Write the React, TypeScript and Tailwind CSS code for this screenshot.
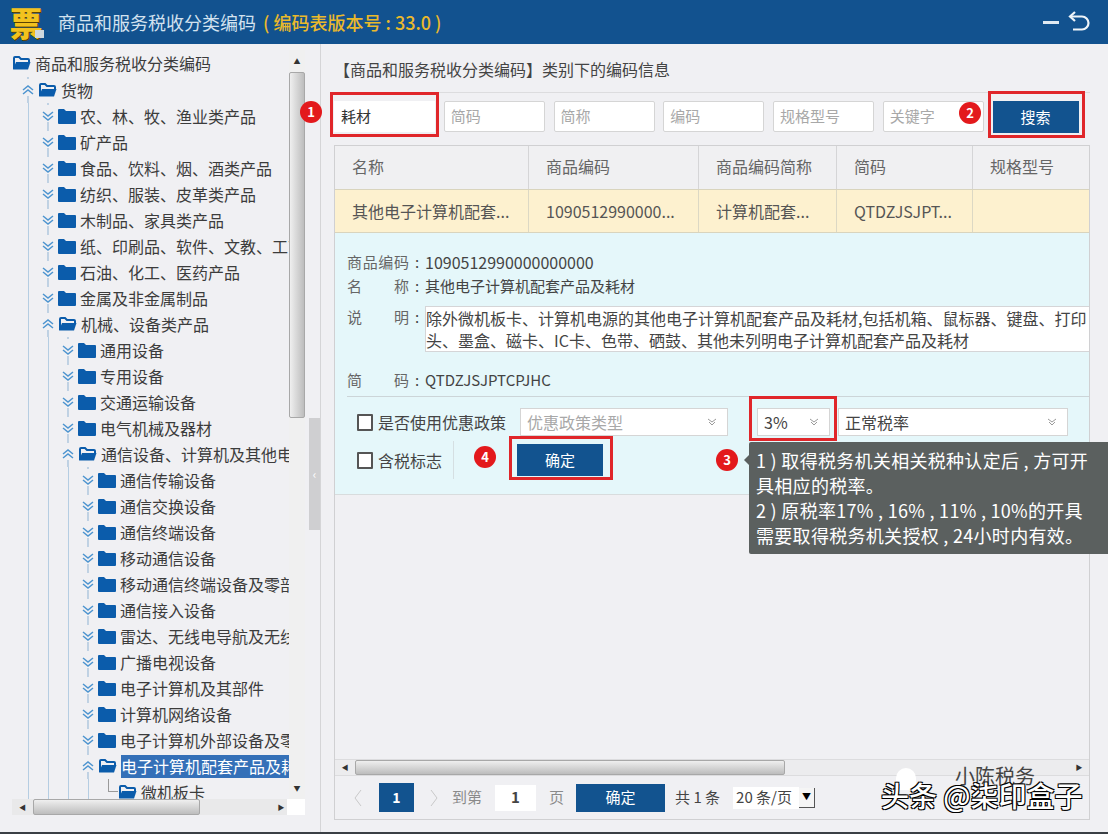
const treeRows = [
  { level: 0, label: "商品和服务税收分类编码", open: true },
  { level: 1, label: "货物", open: true },
  { level: 2, label: "农、林、牧、渔业类产品" },
  { level: 2, label: "矿产品" },
  { level: 2, label: "食品、饮料、烟、酒类产品" },
  { level: 2, label: "纺织、服装、皮革类产品" },
  { level: 2, label: "木制品、家具类产品" },
  { level: 2, label: "纸、印刷品、软件、文教、工艺品" },
  { level: 2, label: "石油、化工、医药产品" },
  { level: 2, label: "金属及非金属制品" },
  { level: 2, label: "机械、设备类产品", open: true },
  { level: 3, label: "通用设备" },
  { level: 3, label: "专用设备" },
  { level: 3, label: "交通运输设备" },
  { level: 3, label: "电气机械及器材" },
  { level: 3, label: "通信设备、计算机及其他电子设备", open: true },
  { level: 4, label: "通信传输设备" },
  { level: 4, label: "通信交换设备" },
  { level: 4, label: "通信终端设备" },
  { level: 4, label: "移动通信设备" },
  { level: 4, label: "移动通信终端设备及零部件" },
  { level: 4, label: "通信接入设备" },
  { level: 4, label: "雷达、无线电导航及无线电设备" },
  { level: 4, label: "广播电视设备" },
  { level: 4, label: "电子计算机及其部件" },
  { level: 4, label: "计算机网络设备" },
  { level: 4, label: "电子计算机外部设备及零部件" },
  { level: 4, label: "电子计算机配套产品及耗材", open: true, selected: true },
  { level: 5, label: "微机板卡", open: true },
];

const Folder = ({ open }: { open?: boolean }) =>
  open ? (
    <svg width="19" height="16" viewBox="0 0 19 16" className="shrink-0">
      <path d="M2 14V3q0-1 1-1h4l2 2h7q1 0 1 1v2" fill="none" stroke="#0b5cab" strokeWidth="2" />
      <path d="M1 14.5 4 7h14.5l-2.500 7.500z" fill="#0b5cab" />
    </svg>
  ) : (
    <svg width="18" height="15" viewBox="0 0 18 15" className="shrink-0">
      <path d="M0 1q0-1 1-1h5l2 2h9q1 0 1 1v11q0 1-1 1H1q-1 0-1-1z" fill="#0b5cab" />
    </svg>
  );

const Toggle = ({ open }: { open?: boolean }) => (
  <svg width="16" height="26" viewBox="0 0 16 26" className="shrink-0">
    <path d="M8 0v4" stroke="#8fb3d3" strokeDasharray="2 2" />
    <path d="M8 19v7" stroke="#8fb3d3" />
    {open ? (
      <path d="M3 13l5-4 5 4M3 17l5-4 5 4" fill="none" stroke="#4d94cf" strokeWidth="1.500" />
    ) : (
      <path d="M3 9l5 4 5-4M3 13l5 4 5-4" fill="none" stroke="#4d94cf" strokeWidth="1.500" />
    )}
  </svg>
);

const TreeRow = ({ row }: { row: (typeof treeRows)[number] }) => {
  const guides = Array.from({ length: Math.max(row.level - 1, 0) });
  return (
    <div className={`flex h-[26px] shrink-0 items-center whitespace-nowrap ${row.level === 0 ? "mb-px pl-[12px]" : "pl-[18px]"}`}>
      {guides.map((_, i) => (
        <div key={i} className="flex h-full w-5 shrink-0 justify-center">
          <div className="h-full w-px bg-[#b5cde2]" />
        </div>
      ))}
      {row.level > 0 && (
        <div className="flex h-full w-5 shrink-0 justify-center">
          {row.level === 5 ? (
            <div className="ml-[10px] h-[13px] w-[11px] border-b border-l border-[#9a9a9a]" />
          ) : (
            <Toggle open={row.open} />
          )}
        </div>
      )}
      <Folder open={row.open} />
      <span
        className={`ml-[4px] h-[23px] pr-[40px] text-[16px] leading-[23px] ${
          row.selected ? "bg-[#3470b8] text-white" : "text-[#3c3c3c]"
        }`}
      >
        {row.label}
      </span>
    </div>
  );
};

const ScrollThumb = ({ className }: { className: string }) => (
  <div className={`rounded-[2px] border border-[#a8a8a8] bg-gradient-to-b from-[#efefef] to-[#bdbdbd] ${className}`} />
);

const Badge = ({ n, className }: { n: number; className: string }) => (
  <div
    className={`absolute flex h-[22px] w-[22px] items-center justify-center rounded-full bg-[#e3191c] text-[13px] font-bold text-white ${className}`}
  >
    {n}
  </div>
);

const Field = ({ placeholder }: { placeholder: string }) => (
  <div className="flex h-[31px] w-[101px] items-center rounded-[2px] border border-[#d5d5d5] bg-white pl-[6px] text-[15px] text-[#a8a8a8]">
    {placeholder}
  </div>
);

const Select = ({ text, muted, className }: { text: string; muted?: boolean; className: string }) => (
  <div
    className={`flex h-[28px] items-center justify-between border border-[#d5d5d5] bg-white pl-[6px] pr-[10px] text-[16px] ${
      muted ? "text-[#a8a8a8]" : "text-[#444]"
    } ${className}`}
  >
    <span>{text}</span>
    <svg width="10" height="10" viewBox="0 0 10 10">
      <path d="M1 2l4 3 4-3M2 5l3 3 3-3" fill="none" stroke="#9a9a9a" />
    </svg>
  </div>
);

const Check = ({ label, className }: { label: string; className: string }) => (
  <div className={`flex items-center ${className}`}>
    <div className="h-[17px] w-[16px] rounded-[1px] border-2 border-[#555] bg-white" />
    <span className="ml-[5px] text-[16px] text-[#444]">{label}</span>
  </div>
);

const InfoLabel = ({ chars }: { chars: string[] }) => (
  <>
    <span className="flex w-[62px] shrink-0 justify-between text-[#666]">
      {chars.map((c) => (
        <span key={c}>{c}</span>
      ))}
    </span>
    <span className="w-[16px] shrink-0 text-center text-[#444]">:</span>
  </>
);

const columns = [
  { head: "名称", cell: "其他电子计算机配套..." },
  { head: "商品编码", cell: "1090512990000..." },
  { head: "商品编码简称", cell: "计算机配套..." },
  { head: "简码", cell: "QTDZJSJPT..." },
  { head: "规格型号", cell: "" },
];

export default function App() {
  return (
    <div className="relative flex h-[834px] w-[1108px] flex-col overflow-hidden border-b-2 border-[#3a3f44] bg-[#f0f0f3] font-['Noto_Sans_CJK_SC','Noto_Sans',sans-serif]">
      <header className="flex h-[44px] shrink-0 items-center bg-[#12528f] pr-[18px]">
        <div className="relative ml-[8px] w-[36px] text-center text-[33px] font-black leading-[38px] text-[#f2c21f] [text-shadow:1px_1px_0_#5c4300]">
          票
          <div className="absolute bottom-[3px] right-0 h-[8px] w-[9px] bg-[#cfd8de]" />
        </div>
        <span className="ml-[14px] text-[18px] text-[#d3e2ef]">商品和服务税收分类编码</span>
        <span className="ml-[7px] text-[18px] font-medium text-[#eab92b]">( 编码表版本号 : 33.0 )</span>
        <div className="ml-auto flex items-center gap-[9px]">
          <div className="h-[3px] w-[16px] bg-[#dfe9f2]" />
          <svg width="22" height="22" viewBox="0 0 22 22">
            <path d="M7 1 2 5.500 7 10" fill="none" stroke="#eef4f9" strokeWidth="2.200" />
            <path d="M3 5.500h11a5.500 5.500 0 0 1 0 13H5" fill="none" stroke="#eef4f9" strokeWidth="2.200" />
          </svg>
        </div>
      </header>

      <div className="flex min-h-0 flex-1">
        {/* tree */}
        <div className="flex w-[305px] shrink-0 flex-col pt-[6px]">
          <div className="flex min-h-0 flex-1">
            <div className="flex w-[289px] shrink-0 flex-col overflow-hidden">
              {treeRows.map((row) => (
                <TreeRow key={row.label} row={row} />
              ))}
            </div>
            <div className="flex w-[16px] flex-col items-center bg-[#f0f0f0]">
              <div className="flex h-[22px] items-center text-[7px] leading-none text-[#333]">▲</div>
              <ScrollThumb className="h-[346px] w-full bg-gradient-to-r" />
              <div className="mt-auto flex h-[22px] items-center text-[7px] leading-none text-[#333]">▼</div>
            </div>
          </div>
          <div className="ml-[12px] mb-[17px] flex h-[16px] shrink-0 items-center bg-[#e9e9ea]">
            <span className="w-[21px] text-center text-[7px] text-[#333]">◀</span>
            <ScrollThumb className="h-full w-[167px]" />
            <span className="ml-auto w-[12px] text-center text-[7px] text-[#333]">▶</span>
            <div className="h-full w-[18px] bg-white" />
          </div>
        </div>
        {/* splitter */}
        <div className="w-[16px] shrink-0 border-r border-[#d5d5d7] pl-[4px] pt-[374px]">
          <div className="flex h-[112px] items-center justify-center bg-[#cfcfd1] text-[12px] text-white">‹</div>
        </div>

        {/* right side */}
        <div className="flex min-w-0 flex-1 flex-col pb-[12px] pl-[13px] pr-[18px]">
          <div className="flex h-[48px] shrink-0 items-end pb-[11px] text-[16px] text-[#444]">
            【商品和服务税收分类编码】类别下的编码信息
          </div>
          <div className="flex h-[53px] shrink-0 items-start gap-[8.75px] border-t border-[#dcdcde] pt-[8px]">
            <div className="flex h-[31px] w-[101px] items-center bg-white pl-[7px] text-[15px] text-[#333]">耗材</div>
            <Field placeholder="简码" />
            <Field placeholder="简称" />
            <Field placeholder="编码" />
            <Field placeholder="规格型号" />
            <Field placeholder="关键字" />
            <div className="flex h-[32px] w-[86px] items-center justify-center bg-[#12538f] text-[15px] text-white">
              搜索
            </div>
          </div>

          <div className="flex min-h-0 flex-1 flex-col border border-[#d0d0d2]">
            <div className="grid h-[43px] shrink-0 grid-cols-[194px_170px_138px_136px_1fr] bg-[#f0f0f2] text-[16px] text-[#666]">
              {columns.map((c) => (
                <div key={c.head} className="flex items-center border-r border-[#d5d5d7] pb-[3px] pl-[17px] last:border-r-0">
                  {c.head}
                </div>
              ))}
            </div>
            <div className="grid h-[44px] shrink-0 grid-cols-[194px_170px_138px_136px_1fr] border-y border-[#d9d4bd] bg-[#fdf1cf] text-[16px] text-[#555]">
              {columns.map((c) => (
                <div key={c.head} className="flex items-center border-r border-[#dcd8c4] pl-[17px] last:border-r-0">
                  {c.cell}
                </div>
              ))}
            </div>

            <div className="flex h-[262px] shrink-0 flex-col border-b border-[#d8dcdd] bg-[#e5f7fa] pl-[12px] pt-[17px] text-[15px]">
              <div className="flex h-[24px] items-center">
                <InfoLabel chars={["商", "品", "编", "码"]} />
                <span className="text-[16px] text-[#444]">1090512990000000000</span>
              </div>
              <div className="flex h-[24px] items-center">
                <InfoLabel chars={["名", "称"]} />
                <span className="text-[#444]">其他电子计算机配套产品及耗材</span>
              </div>
              <div className="mt-[8px] flex items-start">
                <InfoLabel chars={["说", "明"]} />
                <div className="h-[46px] min-w-0 flex-1 overflow-hidden whitespace-nowrap border-y border-l border-[#d5d5d7] bg-white text-[16px] leading-[22px] text-[#444]">
                  除外微机板卡、计算机电源的其他电子计算机配套产品及耗材,包括机箱、鼠标器、键盘、打印
                  <br />
                  头、墨盒、磁卡、IC卡、色带、硒鼓、其他未列明电子计算机配套产品及耗材
                </div>
              </div>
              <div className="mt-[16px] flex h-[24px] items-center">
                <InfoLabel chars={["简", "码"]} />
                <span className="text-[#444]">QTDZJSJPTCPJHC</span>
              </div>
              <div className="mt-[4px] h-px bg-[#ccd5d8]" />
              <div className="mt-[11px] flex items-center">
                <Check label="是否使用优惠政策" className="ml-[10px] w-[163px]" />
                <Select text="优惠政策类型" muted className="w-[208px]" />
                <Select text="3%" className="ml-[29px] w-[73px]" />
                <Select text="正常税率" className="ml-[8px] w-[230px]" />
              </div>
              <div className="mt-[5px] flex items-center">
                <Check label="含税标志" className="ml-[10px] w-[97px] border-r border-[#d5dfe2] py-[7px]" />
                <div className="ml-[63px] flex h-[32px] w-[86px] items-center justify-center bg-[#12538f] text-[15px] text-white">
                  确定
                </div>
              </div>
            </div>

            <div className="min-h-0 flex-1" />

            <div className="flex h-[17px] shrink-0 items-center border-y border-[#dcdcde] bg-[#ececee]">
              <span className="w-[20px] text-center text-[7px] text-[#333]">◀</span>
              <ScrollThumb className="h-full w-[430px]" />
              <span className="ml-auto w-[20px] text-center text-[7px] text-[#333]">▶</span>
            </div>
            <div className="flex h-[43px] shrink-0 items-center text-[15px] text-[#8a8a8a]">
              <svg width="10" height="18" viewBox="0 0 10 18" className="ml-[18px]">
                <path d="M8 1 2 9l6 8" fill="none" stroke="#c9c9c9" />
              </svg>
              <div className="ml-[16px] flex h-[29px] w-[35px] items-center justify-center bg-[#12538f] text-[14px] font-bold text-white">
                1
              </div>
              <svg width="10" height="18" viewBox="0 0 10 18" className="ml-[15px]">
                <path d="M2 1l6 8-6 8" fill="none" stroke="#c9c9c9" />
              </svg>
              <span className="ml-[13px]">到第</span>
              <div className="ml-[13px] flex h-[26px] w-[41px] items-center justify-center bg-white font-bold text-[#444]">
                1
              </div>
              <span className="ml-[13px]">页</span>
              <div className="ml-[12px] flex h-[28px] w-[89px] items-center justify-center bg-[#12538f] text-white">确定</div>
              <span className="ml-[10px] text-[#444]">共 1 条</span>
              <div className="ml-[13px] flex h-[22px] w-[66px] items-center bg-white pl-[3px] text-[#444]">20 条/页</div>
              <div className="flex h-[20px] w-[16px] items-center justify-center border-b border-r border-[#555] bg-[#f5f5f5] text-[9px] text-black">
                ▼
              </div>
            </div>
          </div>
        </div>
      </div>

      {/* annotations */}
      <div className="absolute left-[330px] top-[92px] h-[45px] w-[109px] border-[3px] border-[#e0262a]" />
      <div className="absolute left-[988px] top-[91px] h-[47px] w-[97px] border-[3px] border-[#e0262a]" />
      <div className="absolute left-[749px] top-[396px] h-[45px] w-[88px] border-[3px] border-[#e0262a]" />
      <div className="absolute left-[509px] top-[436px] h-[44px] w-[104px] border-[3px] border-[#e0262a]" />
      <Badge n={1} className="left-[300px] top-[101px]" />
      <Badge n={2} className="left-[959px] top-[102px]" />
      <Badge n={3} className="left-[716px] top-[449px]" />
      <Badge n={4} className="left-[474px] top-[446px]" />

      <div className="absolute left-[749px] top-[442px] h-[112px] w-[359px] rounded-l-[2px] bg-[#5b605f] pl-[7px] pt-[6px] text-[18px] leading-[25px] tracking-[0.3px] text-white whitespace-nowrap">
        <div className="absolute -left-[5px] top-[13px] h-0 w-0 border-y-[5px] border-r-[5px] border-y-transparent border-r-[#5b605f]" />
        1 ) 取得税务机关相关税种认定后 , 方可开
        <br />
        具相应的税率。
        <br />
        2 ) 原税率17% , 16% , 11% , 10%的开具
        <br />
        需要取得税务机关授权 , 24小时内有效。
      </div>

      <div className="absolute left-[896px] top-[768px] h-[22px] w-[20px] rounded-t-full bg-white" />
      <div className="absolute left-[955px] top-[762px] text-[20px] leading-[28px] text-[#444]">小陈税务</div>
      <div className="absolute left-[881px] top-[776px] text-[28px] font-medium leading-[38px] whitespace-nowrap text-white [text-shadow:1px_1px_0_#000,-1px_-1px_0_#000,1px_-1px_0_#000,-1px_1px_0_#000]">
        头条 @柒印盒子
      </div>
    </div>
  );
}
